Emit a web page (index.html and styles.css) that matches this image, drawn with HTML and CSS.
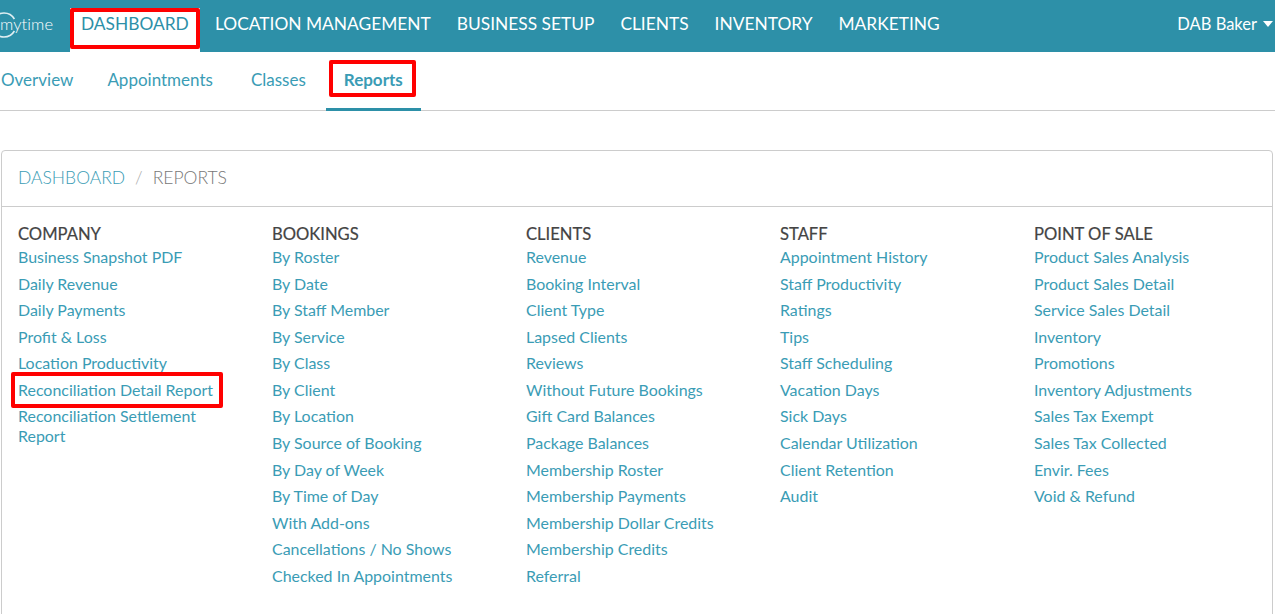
FILE: index.html
```html
<!DOCTYPE html>
<html lang="en">
<head>
<meta charset="utf-8">
<title>Reports</title>
<link rel="stylesheet" href="styles.css">
</head>
<body>
<header class="topbar">
  <svg class="logo" width="70" height="52" viewBox="0 0 70 52"><path d="M-6.4 19 A12 12 0 0 1 14.4 19 M14.4 31 A12 12 0 0 1 -6.4 31" fill="none" stroke="#fff" stroke-width="1.6" opacity=".85"/><text x="0" y="30" class="logo-text">mytime</text></svg>
  <nav class="mainnav">
    <a class="mainlink active">DASHBOARD</a>
    <a class="mainlink">LOCATION MANAGEMENT</a>
    <a class="mainlink">BUSINESS SETUP</a>
    <a class="mainlink">CLIENTS</a>
    <a class="mainlink">INVENTORY</a>
    <a class="mainlink">MARKETING</a>
  </nav>
  <div class="user">DAB Baker<span class="caret"></span></div>
</header>
<nav class="subnav">
  <a class="sublink">Overview</a>
  <a class="sublink">Appointments</a>
  <a class="sublink">Classes</a>
  <a class="sublink current">Reports</a>
</nav>
<main class="panel">
  <div class="crumbs"><span class="crumb-link">DASHBOARD</span><span class="sep">/</span><span class="crumb-here">REPORTS</span></div>
  <div class="cols">
    <section class="col"><h3>COMPANY</h3>
      <a>Business Snapshot PDF</a><a>Daily Revenue</a><a>Daily Payments</a><a>Profit &amp; Loss</a><a>Location Productivity</a><a class="boxed">Reconciliation Detail Report</a><a>Reconciliation Settlement Report</a>
    </section>
    <section class="col"><h3>BOOKINGS</h3>
      <a>By Roster</a><a>By Date</a><a>By Staff Member</a><a>By Service</a><a>By Class</a><a>By Client</a><a>By Location</a><a>By Source of Booking</a><a>By Day of Week</a><a>By Time of Day</a><a>With Add-ons</a><a>Cancellations / No Shows</a><a>Checked In Appointments</a>
    </section>
    <section class="col"><h3>CLIENTS</h3>
      <a>Revenue</a><a>Booking Interval</a><a>Client Type</a><a>Lapsed Clients</a><a>Reviews</a><a>Without Future Bookings</a><a>Gift Card Balances</a><a>Package Balances</a><a>Membership Roster</a><a>Membership Payments</a><a>Membership Dollar Credits</a><a>Membership Credits</a><a>Referral</a>
    </section>
    <section class="col"><h3>STAFF</h3>
      <a>Appointment History</a><a>Staff Productivity</a><a>Ratings</a><a>Tips</a><a>Staff Scheduling</a><a>Vacation Days</a><a>Sick Days</a><a>Calendar Utilization</a><a>Client Retention</a><a>Audit</a>
    </section>
    <section class="col"><h3>POINT OF SALE</h3>
      <a>Product Sales Analysis</a><a>Product Sales Detail</a><a>Service Sales Detail</a><a>Inventory</a><a>Promotions</a><a>Inventory Adjustments</a><a>Sales Tax Exempt</a><a>Sales Tax Collected</a><a>Envir. Fees</a><a>Void &amp; Refund</a>
    </section>
  </div>
</main>
</body>
</html>
```
FILE: styles.css
```css
*, *::before, *::after { box-sizing: border-box; }
html, body { margin: 0; height: 614px; overflow: hidden; background: #fff; }
body { font-family: Lato, "Liberation Sans", sans-serif; color: #3a9cb5; }
.topbar { height: 52px; background: #2d90a8; display: flex; align-items: stretch; color: #fff; }
.logo { flex: none; }
.logo-text { font: 300 16.5px Lato, sans-serif; letter-spacing: .1px; fill: #fff; }
.mainnav { display: flex; }
.mainlink { font-size: 17.35px; padding: 0 13px; line-height: 48px; white-space: nowrap; }
.mainlink.active { position: relative; background: #fff; color: #2d90a8; height: 44px; margin: 8px 2.2px 0 0; padding: 0 11px; line-height: 32px; }
.mainlink.active::after { content: ""; position: absolute; left: 0; right: 0; top: 0; height: 41px; border: 4px solid #f00; border-radius: 2px; }
.user { margin-left: auto; font-size: 16.5px; padding: 0 2px 5px 0; display: flex; align-items: center; gap: 6px; }
.caret { border: 5.5px solid transparent; border-top: 6px solid #fff; border-bottom: 0; }
.subnav { height: 59px; border-bottom: 1px solid #ccc; display: flex; margin-left: -17px; }
.sublink { font-size: 17px; line-height: 55px; padding: 0 18px; height: 59px; }
.sublink:first-child { margin-right: -2px; }
.sublink:nth-child(3) { margin-left: 2px; }
.sublink.current { position: relative; margin-left: 2px; font-weight: 700; border-bottom: 3px solid #2d90a8; }
.sublink.current::after { content: ""; position: absolute; left: 3px; right: 5px; top: 8px; height: 37px; border: 4px solid #f00; border-radius: 2px; }
.panel { margin: 39px 2px 0 1px; border: 1px solid #ccc; border-radius: 4px; height: 500px; }
.crumbs { height: 56px; border-bottom: 1px solid #ccc; padding-left: 16px; font-size: 17.5px; font-weight: 300; line-height: 53px; }
.crumb-link { color: #3a9cb5; }
.sep { color: #aaa; margin: 0 10px; }
.crumb-here { color: #777; }
.cols { display: grid; grid-template-columns: repeat(5, 254px); padding: 15px 16px; }
.col h3 { margin: 0 0 1px; font-size: 16.6px; font-weight: 400; color: #444; line-height: 24px; -webkit-text-stroke: .2px #444; }
.col a { display: block; font-size: 15.95px; line-height: 20px; margin-bottom: 6.57px; padding-right: 40px; }
.boxed { position: relative; }
.boxed::after { content: ""; position: absolute; left: -7px; top: -8px; width: 212px; height: 36px; border: 4px solid #f00; border-radius: 2px; }
```
